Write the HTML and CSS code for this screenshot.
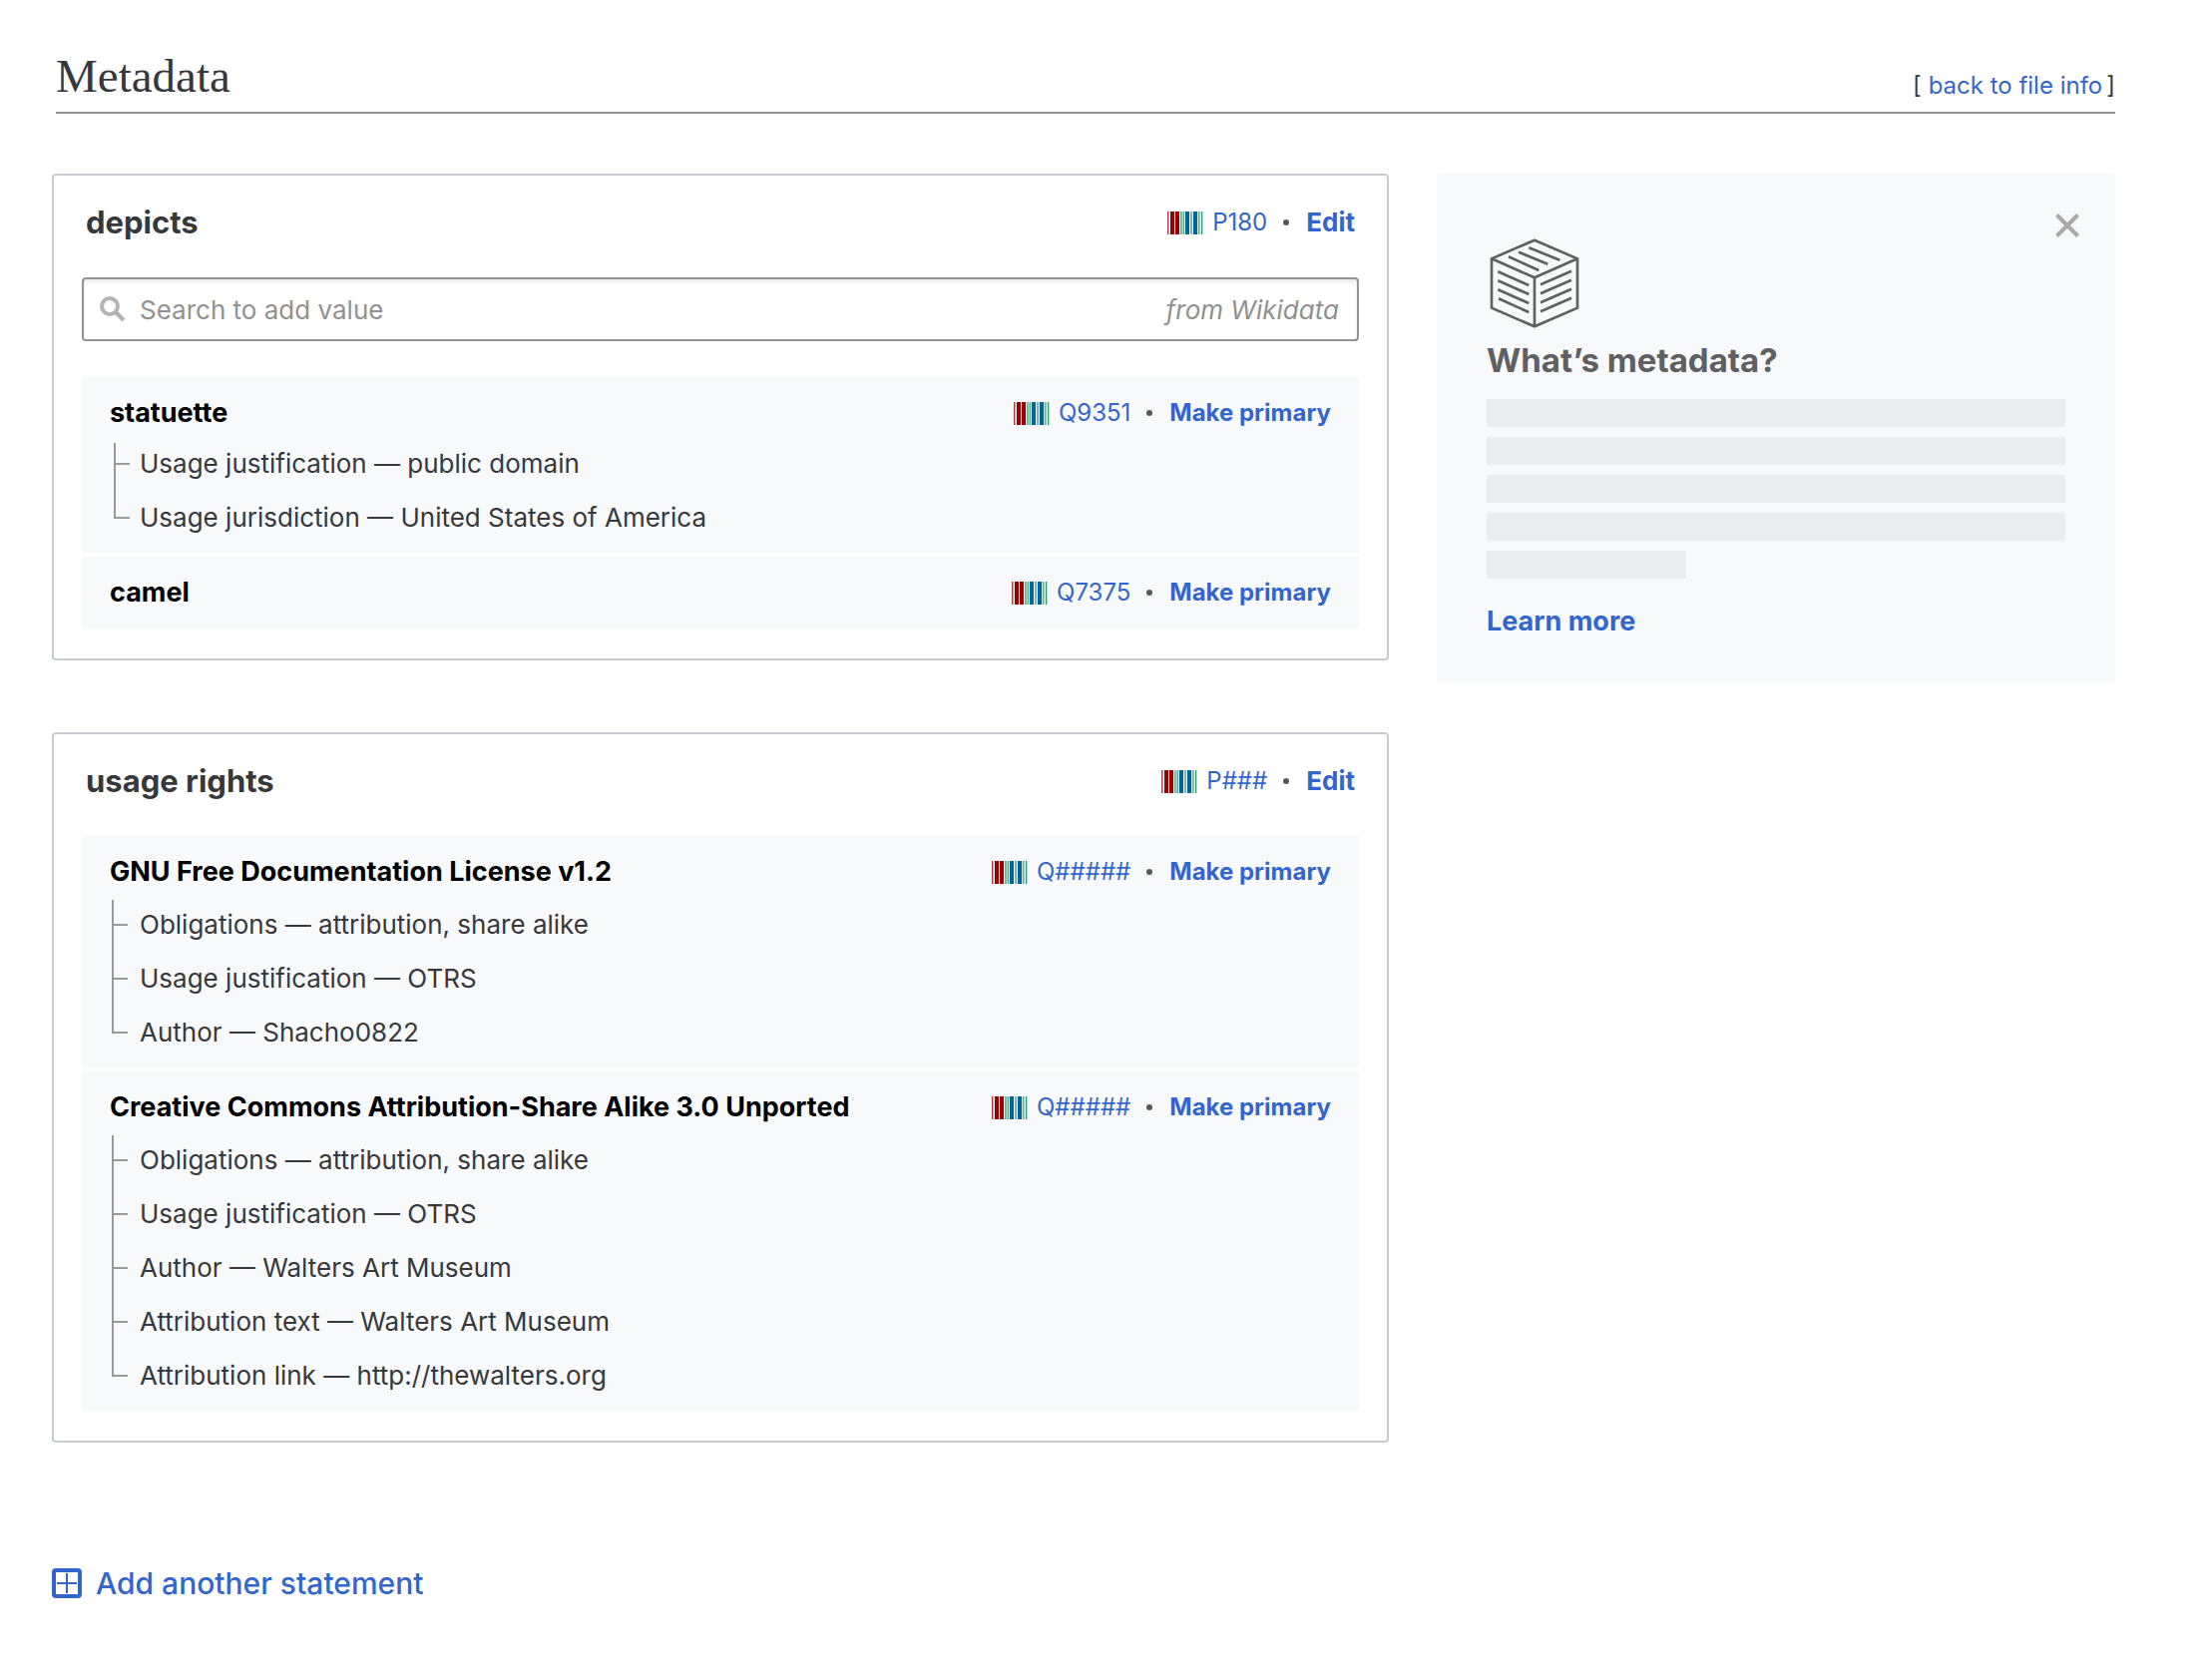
FILE: index.html
```html
<!DOCTYPE html>
<html lang="en">
<head>
<meta charset="utf-8">
<title>Metadata</title>
<meta name="viewport" content="width=device-width, initial-scale=1">
<link rel="stylesheet" href="styles.css">
</head>
<body>
<svg class="sprite" aria-hidden="true">
  <symbol id="barcode" viewBox="0 0 36 23">
    <g fill="#990000"><rect width="1.5" height="23" opacity=".75"/><rect x="3" width="4" height="23"/><rect x="8" width="4" height="23"/></g>
    <g fill="#339966"><rect x="13" width="1.8" height="23" opacity=".7"/><rect x="15.6" width="1.2" height="23"/><rect x="30.7" width="2" height="23" opacity=".7"/><rect x="34" width="1.3" height="23"/></g>
    <g fill="#006699"><rect x="18" width="4" height="23"/><rect x="23.3" width="1.4" height="23" opacity=".7"/><rect x="26" width="4" height="23"/></g>
  </symbol>
</svg>

<header class="page-head">
  <h1 class="page-title">Metadata</h1>
  <p class="back">[ <a href="#file-info">back to file info</a><span class="back-end">]</span></p>
</header>

<div class="layout">
  <main class="statements">
    <section class="card">
      <div class="card-head">
        <h2 class="card-title">depicts</h2>
        <div class="actions">
          <svg class="barcode" aria-hidden="true"><use href="#barcode"/></svg>
          <a class="entity" href="#P180">P180</a>
          <span class="dot"></span>
          <button class="action action-edit" type="button">Edit</button>
        </div>
      </div>
      <label class="search">
        <svg class="search-icon" viewBox="0 0 26 26" aria-hidden="true"><circle cx="10" cy="10" r="8" fill="none" stroke="#b3b3b3" stroke-width="4"/><path d="M15.5 15.5 24 24" stroke="#b3b3b3" stroke-width="4.4"/></svg>
        <input class="search-input" type="text" placeholder="Search to add value" aria-label="Search to add value">
        <span class="search-source">from Wikidata</span>
      </label>
      <div class="values">
        <article class="value value-compact">
          <div class="value-head">
            <h3 class="value-title">statuette</h3>
            <div class="actions">
              <svg class="barcode" aria-hidden="true"><use href="#barcode"/></svg>
              <a class="entity" href="#Q9351">Q9351</a>
              <span class="dot"></span>
              <button class="action" type="button">Make primary</button>
            </div>
          </div>
          <ul class="qualifiers">
            <li>Usage justification — public domain</li>
            <li>Usage jurisdiction — United States of America</li>
          </ul>
        </article>
        <article class="value">
          <div class="value-head">
            <h3 class="value-title">camel</h3>
            <div class="actions">
              <svg class="barcode" aria-hidden="true"><use href="#barcode"/></svg>
              <a class="entity" href="#Q7375">Q7375</a>
              <span class="dot"></span>
              <button class="action" type="button">Make primary</button>
            </div>
          </div>
        </article>
      </div>
    </section>

    <section class="card">
      <div class="card-head">
        <h2 class="card-title">usage rights</h2>
        <div class="actions">
          <svg class="barcode" aria-hidden="true"><use href="#barcode"/></svg>
          <a class="entity" href="#property">P###</a>
          <span class="dot"></span>
          <button class="action action-edit" type="button">Edit</button>
        </div>
      </div>
      <div class="values">
        <article class="value">
          <div class="value-head">
            <h3 class="value-title">GNU Free Documentation License v1.2</h3>
            <div class="actions">
              <svg class="barcode" aria-hidden="true"><use href="#barcode"/></svg>
              <a class="entity" href="#gfdl">Q#####</a>
              <span class="dot"></span>
              <button class="action" type="button">Make primary</button>
            </div>
          </div>
          <ul class="qualifiers">
            <li>Obligations — attribution, share alike</li>
            <li>Usage justification — OTRS</li>
            <li>Author — Shacho0822</li>
          </ul>
        </article>
        <article class="value">
          <div class="value-head">
            <h3 class="value-title">Creative Commons Attribution-Share Alike 3.0 Unported</h3>
            <div class="actions">
              <svg class="barcode" aria-hidden="true"><use href="#barcode"/></svg>
              <a class="entity" href="#cc-by-sa">Q#####</a>
              <span class="dot"></span>
              <button class="action" type="button">Make primary</button>
            </div>
          </div>
          <ul class="qualifiers">
            <li>Obligations — attribution, share alike</li>
            <li>Usage justification — OTRS</li>
            <li>Author — Walters Art Museum</li>
            <li>Attribution text — Walters Art Museum</li>
            <li>Attribution link — http://thewalters.org</li>
          </ul>
        </article>
      </div>
    </section>
  </main>

  <aside class="help">
    <button class="close" type="button" aria-label="Close">
      <svg viewBox="0 0 24 24" aria-hidden="true"><path d="M1.5 1.5 22.5 22.5M22.5 1.5 1.5 22.5" stroke="#a9a9a9" stroke-width="4"/></svg>
    </button>
    <svg class="cube" viewBox="28 26 270 270" fill="none" stroke="#5f6063" stroke-width="8" aria-hidden="true">
      <path d="M163 31 292 87V235L163 291 34 235V87ZM34 87 163 144 292 87M163 144V291"/>
      <path d="M85 81 176 122M115 67 203 103M146 54 239 91"/>
      <path d="M53 126 146 167M53 153 146 194M53 180 146 221M55 207 146 248"/>
      <path d="M181 165 274 124M181 192 274 151M181 219 274 178M181 246 274 205"/>
    </svg>
    <h2 class="help-title">What’s metadata?</h2>
    <div class="lines" aria-hidden="true">
      <div class="line"></div>
      <div class="line"></div>
      <div class="line"></div>
      <div class="line"></div>
      <div class="line line-short"></div>
    </div>
    <a class="learn" href="#learn-more">Learn more</a>
  </aside>
</div>

<button class="add" type="button">
  <svg class="add-icon" viewBox="0 0 30 30" fill="none" stroke="#3366cc" aria-hidden="true"><rect x="2" y="2" width="26" height="26" rx="2" stroke-width="4"/><path d="M15 5V25M5 15H25" stroke-width="2"/></svg>
  Add another statement
</button>
</body>
</html>
```
FILE: styles.css
```css
* {
  box-sizing: border-box;
}

body {
  margin: 0;
  padding: 48px 94px 80px 52px;
  background: #fff;
  color: #36383b;
  font: 26px/40px Inter, "Liberation Sans", sans-serif;
}

h1, h2, h3, p, ul {
  margin: 0;
  padding: 0;
}

a {
  color: #3366cc;
  text-decoration: none;
}

button {
  padding: 0;
  border: 0;
  background: none;
  color: #3366cc;
  font: inherit;
  cursor: pointer;
}

.sprite {
  position: absolute;
  width: 0;
  height: 0;
}

/* Page heading */

.page-head {
  display: flex;
  justify-content: space-between;
  align-items: flex-end;
  margin-left: 4px;
  padding-bottom: 8px;
  border-bottom: 2px solid #949494;
}

.page-title {
  font: 400 47px/56px "Liberation Serif", serif;
}

.back {
  font-size: 24px;
  line-height: 36px;
}

.back-end {
  margin-left: 4px;
}

/* Two columns */

.layout {
  display: grid;
  grid-template-columns: 67fr 34fr;
  gap: 48px;
  align-items: start;
  margin-top: 60px;
}

.statements {
  display: grid;
  gap: 72px;
}

.card {
  padding: 0 28px 30px;
  border: 2px solid #c8ccd1;
  border-radius: 4px;
}

.card-head {
  display: flex;
  justify-content: space-between;
  align-items: center;
  height: 102px;
  padding: 0 4px 8px;
}

.card-title {
  font-size: 31px;
  font-weight: 700;
}

.actions {
  display: flex;
  align-items: center;
}

.barcode {
  width: 36px;
  height: 23px;
  margin-right: 9px;
}

.entity {
  font-size: 24px;
}

.dot {
  width: 6px;
  height: 6px;
  margin: 0 17px 0 16px;
  border-radius: 50%;
  background: #54595d;
}

.action {
  font-size: 24px;
  font-weight: 700;
}

.action-edit {
  font-size: 26px;
}

/* Search box */

.search {
  display: flex;
  align-items: center;
  height: 64px;
  margin-bottom: 36px;
  padding: 0 18px 0 16px;
  border: 2px solid #949494;
  border-radius: 4px;
  box-shadow: inset 0 3px 3px #ececec;
  color: #919191;
}

.search-icon {
  width: 26px;
  height: 26px;
}

.search-input {
  flex: 1;
  min-width: 0;
  padding: 2px 0 0;
  margin-left: 14px;
  border: 0;
  outline: 0;
  background: none;
  color: inherit;
  font: inherit;
}

.search-input::placeholder {
  color: inherit;
  opacity: 1;
}

.search-source {
  padding-top: 2px;
  font-style: italic;
}

/* Values and their qualifiers */

.values {
  display: grid;
  gap: 4px;
}

.value {
  padding: 16px 28px 8px;
  background: #f8f9fb;
}

.value-head {
  display: flex;
  justify-content: space-between;
}

.value-head:last-child {
  margin-bottom: 8px;
}

.value-title {
  color: #000;
  font-size: 27px;
  font-weight: 700;
}

.qualifiers {
  margin: 6px 0 0 2px;
  list-style: none;
}

.value-compact .qualifiers {
  margin: 4px 0 0 4px;
}

.qualifiers li {
  padding-left: 28px;
  line-height: 54px;
  background-image: linear-gradient(#999, #999), linear-gradient(#999, #999);
  background-position: 0 0, 0 26px;
  background-size: 2px 100%, 16px 2px;
  background-repeat: no-repeat;
}

.value-compact .qualifiers li {
  padding-left: 26px;
}

.qualifiers li:first-child {
  background-position: 0 2px, 0 26px;
}

.value-compact .qualifiers li:first-child {
  background-position: 0 6px, 0 26px;
}

.qualifiers li:last-child {
  background-size: 2px 28px, 16px 2px;
}

/* Help panel */

.help {
  position: relative;
  padding: 65px 50px 45px;
  border-radius: 4px;
  background: #f8f9fb;
}

.close {
  position: absolute;
  top: 40px;
  right: 36px;
  width: 24px;
  height: 24px;
}

.close svg,
.cube {
  display: block;
}

.cube {
  width: 90px;
  height: 90px;
  margin-left: 3px;
}

.help-title {
  margin: 12px 0 19px;
  color: #5f6063;
  font-size: 33px;
  font-weight: 700;
}

.lines {
  display: grid;
  gap: 10px;
}

.line {
  height: 28px;
  background: #ebecef;
}

.line-short {
  width: 200px;
}

.learn {
  display: block;
  margin-top: 27px;
  font-size: 27px;
  font-weight: 700;
  line-height: 32px;
}

/* Add button */

.add {
  display: flex;
  align-items: center;
  gap: 14px;
  margin-top: 121px;
  font-size: 30px;
  font-weight: 500;
}

.add-icon {
  width: 30px;
  height: 30px;
}
```
